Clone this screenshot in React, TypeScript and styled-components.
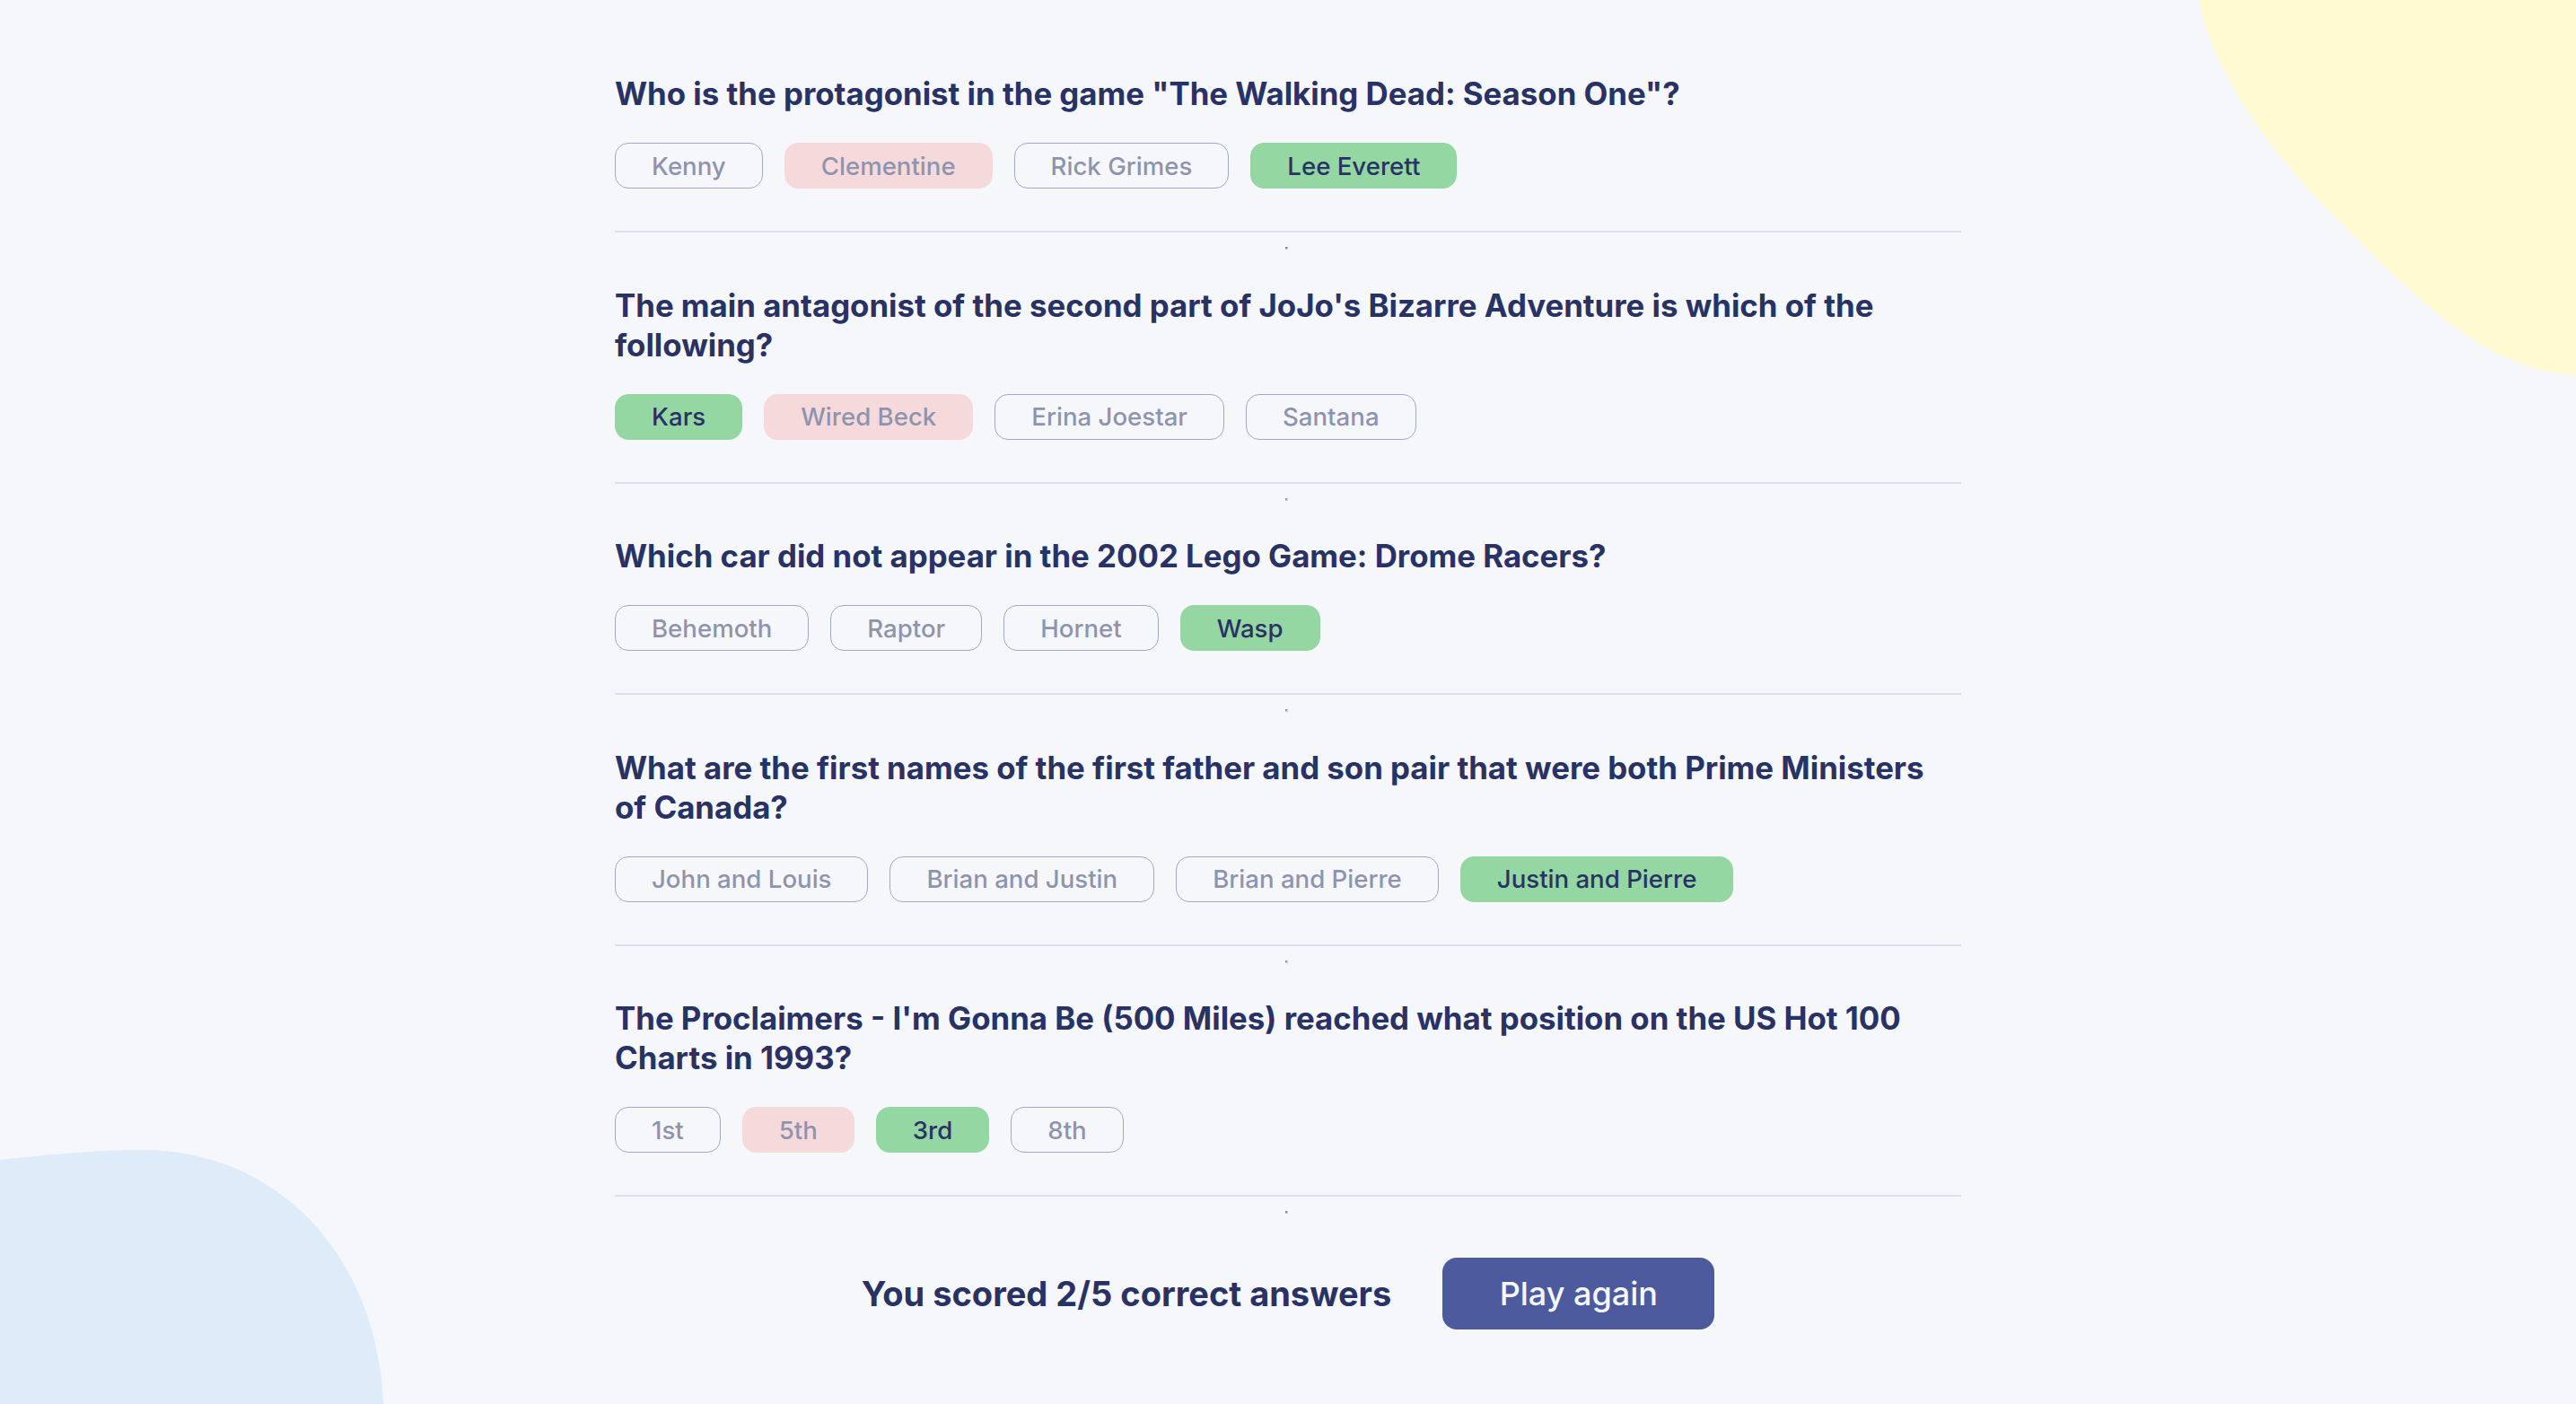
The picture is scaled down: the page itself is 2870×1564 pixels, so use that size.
import React from "react";
import styled, { createGlobalStyle } from "styled-components";

const GlobalStyle = createGlobalStyle`
  * { box-sizing: border-box; }
  html, body { margin: 0; padding: 0; background: #F5F7FB; }
  body { font-family: Inter, "Open Sans", sans-serif; }
`;

type Status = "neutral" | "wrong" | "correct";

interface Question {
  question: string;
  answers: { text: string; status: Status }[];
}

const questions: Question[] = [
  {
    question: 'Who is the protagonist in the game "The Walking Dead: Season One"?',
    answers: [
      { text: "Kenny", status: "neutral" },
      { text: "Clementine", status: "wrong" },
      { text: "Rick Grimes", status: "neutral" },
      { text: "Lee Everett", status: "correct" },
    ],
  },
  {
    question:
      "The main antagonist of the second part of JoJo's Bizarre Adventure is which of the following?",
    answers: [
      { text: "Kars", status: "correct" },
      { text: "Wired Beck", status: "wrong" },
      { text: "Erina Joestar", status: "neutral" },
      { text: "Santana", status: "neutral" },
    ],
  },
  {
    question: "Which car did not appear in the 2002 Lego Game: Drome Racers?",
    answers: [
      { text: "Behemoth", status: "neutral" },
      { text: "Raptor", status: "neutral" },
      { text: "Hornet", status: "neutral" },
      { text: "Wasp", status: "correct" },
    ],
  },
  {
    question:
      "What are the first names of the first father and son pair that were both Prime Ministers of Canada?",
    answers: [
      { text: "John and Louis", status: "neutral" },
      { text: "Brian and Justin", status: "neutral" },
      { text: "Brian and Pierre", status: "neutral" },
      { text: "Justin and Pierre", status: "correct" },
    ],
  },
  {
    question:
      "The Proclaimers - I'm Gonna Be (500 Miles) reached what position on the US Hot 100 Charts in 1993?",
    answers: [
      { text: "1st", status: "neutral" },
      { text: "5th", status: "wrong" },
      { text: "3rd", status: "correct" },
      { text: "8th", status: "neutral" },
    ],
  },
];

const Page = styled.div`
  position: relative;
  min-height: 100vh;
  overflow: hidden;
  background: #f5f7fb;
`;

const BlobTopRight = styled.svg`
  position: absolute;
  top: 0;
  right: 0;
  width: 420px;
  height: 420px;
  z-index: 0;
`;

const BlobBottomLeft = styled.svg`
  position: absolute;
  bottom: 0;
  left: 0;
  width: 430px;
  height: 285px;
  z-index: 0;
`;

const Main = styled.main`
  position: relative;
  z-index: 1;
  width: 1500px;
  margin: 0 auto;
  padding-top: 82px;
  display: flex;
  flex-direction: column;
`;

const Block = styled.section`
  display: flex;
  flex-direction: column;
`;

const Title = styled.h2`
  margin: 0 0 33px;
  font-family: Inter, sans-serif;
  font-weight: 700;
  font-size: 34.8px;
  line-height: 44px;
  color: #293264;
`;

const AnswerRow = styled.div`
  display: flex;
  gap: 24px;
`;

const Answer = styled.button<{ $status: Status }>`
  height: 51px;
  padding: 0 40px;
  border-radius: 15px;
  font-family: Inter, sans-serif;
  font-size: 27.6px;
  font-weight: 500;
  color: #293264;
  cursor: pointer;
  border: 1.5px solid
    ${(p) =>
      p.$status === "correct" ? "#94D7A2" : p.$status === "wrong" ? "#F8BCBC" : "#4D5B9E"};
  background: ${(p) =>
    p.$status === "correct" ? "#94D7A2" : p.$status === "wrong" ? "#F8BCBC" : "transparent"};
  opacity: ${(p) => (p.$status === "correct" ? 1 : 0.5)};
`;

const Divider = styled.hr`
  margin: 47px 0 0;
  border: none;
  height: 2px;
  background: #dbdef0;
`;

const MarkRow = styled.div<{ $last?: boolean }>`
  height: ${(p) => (p.$last ? "68px" : "58.5px")};
  display: flex;
  justify-content: center;
  padding-top: 16px;
`;

const Mark = styled.span`
  display: block;
  width: 3px;
  height: 3px;
  margin-left: -4px;
  background: linear-gradient(135deg, #8a8a8a 50%, #c8c8c8 50%);
`;

const ScoreRow = styled.div`
  display: flex;
  justify-content: center;
  align-items: center;
  gap: 57px;
`;

const ScoreText = styled.p`
  margin: 0;
  font-family: Inter, sans-serif;
  font-weight: 700;
  font-size: 38px;
  color: #293264;
`;

const PlayButton = styled.button`
  width: 303px;
  height: 80px;
  border: none;
  border-radius: 16px;
  background: #4d5b9e;
  color: #f5f7fb;
  font-family: Inter, sans-serif;
  font-weight: 500;
  font-size: 36px;
  cursor: pointer;
`;

export default function App() {
  return (
    <>
      <GlobalStyle />
      <Page>
        <BlobTopRight viewBox="0 0 420 420" preserveAspectRatio="none">
          <path d="M0,0 C15,80 80,170 150,240 C230,320 320,417 420,417 L420,0 Z" fill="#FFFAD1" />
        </BlobTopRight>
        <BlobBottomLeft viewBox="0 0 430 285" preserveAspectRatio="none">
          <path d="M0,13 C50,8 100,2 160,2 C300,2 420,110 427,285 L0,285 Z" fill="#DEEBF8" />
        </BlobBottomLeft>
        <Main>
          {questions.map((q, i) => (
            <Block key={i}>
              <Title>{q.question}</Title>
              <AnswerRow>
                {q.answers.map((a) => (
                  <Answer key={a.text} $status={a.status}>
                    {a.text}
                  </Answer>
                ))}
              </AnswerRow>
              <Divider />
              <MarkRow $last={i === questions.length - 1}>
                <Mark />
              </MarkRow>
            </Block>
          ))}
          <ScoreRow>
            <ScoreText>You scored 2/5 correct answers</ScoreText>
            <PlayButton>Play again</PlayButton>
          </ScoreRow>
        </Main>
      </Page>
    </>
  );
}
